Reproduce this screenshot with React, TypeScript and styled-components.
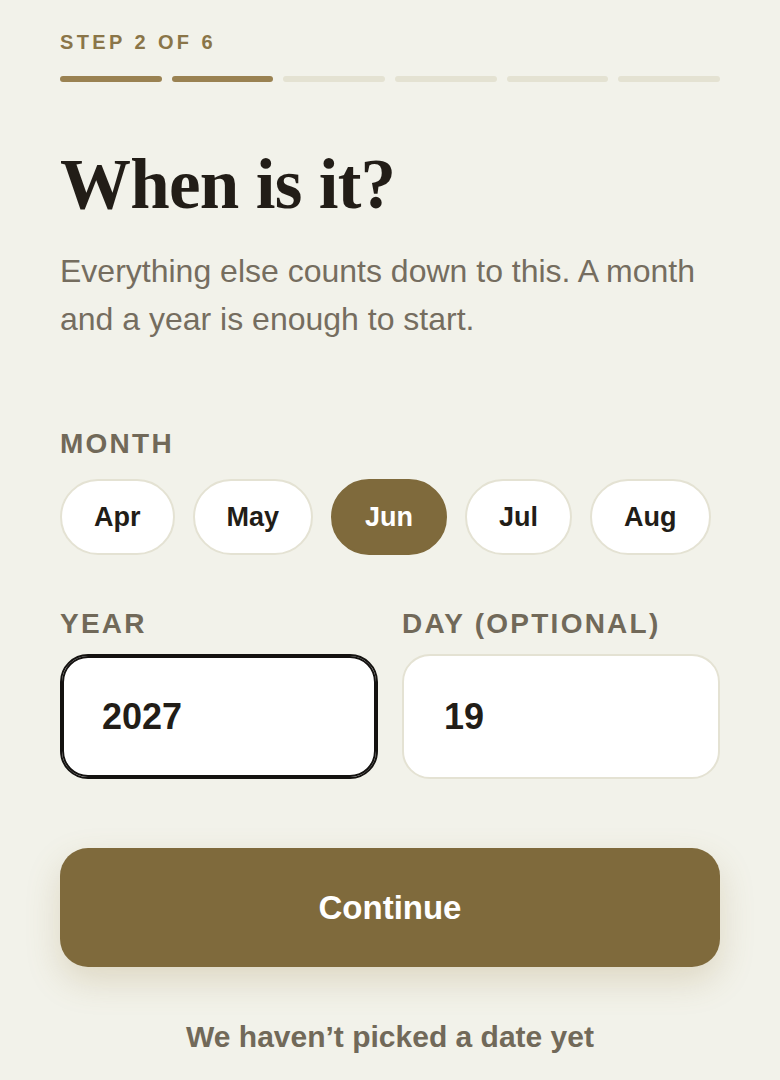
import React from "react";
import styled, { createGlobalStyle } from "styled-components";

const Global = createGlobalStyle`
  html, body { margin: 0; padding: 0; background: #f2f2ea; }
  body { font-family: "Liberation Sans", Arial, sans-serif; }
  * { box-sizing: border-box; }
`;

const Page = styled.main`
  width: 780px;
  min-height: 1080px;
  padding: 30px 60px 0;
  display: flex;
  flex-direction: column;
`;

const StepLabel = styled.div`
  font-size: 20px;
  line-height: 24px;
  font-weight: 700;
  letter-spacing: 0.17em;
  color: #8a7548;
`;

const Progress = styled.div`
  display: grid;
  grid-template-columns: repeat(6, 1fr);
  gap: 10px;
  margin-top: 22px;
`;

const Segment = styled.div<{ $active: boolean }>`
  height: 6px;
  border-radius: 3px;
  background: ${(p) => (p.$active ? "#9a8252" : "#e4e2d2")};
`;

const Title = styled.h1`
  margin: 64px 0 0;
  font-family: "Liberation Serif", "Times New Roman", serif;
  font-weight: 700;
  font-size: 71px;
  line-height: 77px;
  letter-spacing: -0.01em;
  color: #221d17;
`;

const Lead = styled.p`
  margin: 24px 0 0;
  font-size: 32px;
  line-height: 48px;
  color: #756d5f;
`;

const FieldLabel = styled.div<{ $top: number; $gap: number }>`
  margin-top: ${(p) => p.$top}px;
  margin-bottom: ${(p) => p.$gap}px;
  font-size: 28px;
  line-height: 32px;
  font-weight: 700;
  letter-spacing: 0.08em;
  color: #716959;
`;

const Chips = styled.div`
  display: flex;
  gap: 18px;
`;

const Chip = styled.button<{ $selected: boolean }>`
  height: 76px;
  padding: 0 32px;
  border-radius: 999px;
  border: 2px solid ${(p) => (p.$selected ? "#7f6a3c" : "#e4e2d3")};
  background: ${(p) => (p.$selected ? "#7f6a3c" : "#ffffff")};
  color: ${(p) => (p.$selected ? "#ffffff" : "#221d17")};
  font-family: "Liberation Sans", Arial, sans-serif;
  font-size: 27px;
  font-weight: 700;
  cursor: pointer;
`;

const Row = styled.div`
  display: grid;
  grid-template-columns: 1fr 1fr;
  gap: 24px;
`;

const Field = styled.div`
  display: flex;
  flex-direction: column;
`;

const Input = styled.input<{ $focused?: boolean }>`
  width: 100%;
  height: 125px;
  padding: 0 40px;
  border-radius: 28px;
  border: 2px solid ${(p) => (p.$focused ? "#141210" : "#e4e2d3")};
  box-shadow: ${(p) => (p.$focused ? "inset 0 0 0 2px #141210" : "none")};
  background: #ffffff;
  color: #221d17;
  font-family: "Liberation Sans", Arial, sans-serif;
  font-size: 36px;
  font-weight: 700;
  outline: none;
`;

const Continue = styled.button`
  margin-top: 69px;
  height: 119px;
  width: 100%;
  border: none;
  border-radius: 28px;
  background: #7f6a3c;
  color: #ffffff;
  font-family: "Liberation Sans", Arial, sans-serif;
  font-size: 33px;
  font-weight: 700;
  box-shadow: 0 14px 34px rgba(150, 125, 60, 0.22);
  cursor: pointer;
`;

const Secondary = styled.button`
  margin-top: 52px;
  align-self: center;
  border: none;
  background: none;
  padding: 0;
  font-family: "Liberation Sans", Arial, sans-serif;
  font-size: 30px;
  line-height: 36px;
  font-weight: 700;
  color: #716959;
  cursor: pointer;
`;

const months = ["Apr", "May", "Jun", "Jul", "Aug"];

export default function App() {
  return (
    <>
      <Global />
      <Page>
        <StepLabel>STEP 2 OF 6</StepLabel>
        <Progress>
          {[0, 1, 2, 3, 4, 5].map((i) => (
            <Segment key={i} $active={i < 2} />
          ))}
        </Progress>
        <Title>When is it?</Title>
        <Lead>
          Everything else counts down to this. A month and a year is enough to start.
        </Lead>
        <FieldLabel $top={85} $gap={19}>MONTH</FieldLabel>
        <Chips>
          {months.map((m) => (
            <Chip key={m} $selected={m === "Jun"}>
              {m}
            </Chip>
          ))}
        </Chips>
        <Row>
          <Field>
            <FieldLabel $top={53} $gap={14}>YEAR</FieldLabel>
            <Input $focused defaultValue="2027" />
          </Field>
          <Field>
            <FieldLabel $top={53} $gap={14}>DAY (OPTIONAL)</FieldLabel>
            <Input defaultValue="19" />
          </Field>
        </Row>
        <Continue>Continue</Continue>
        <Secondary>We haven’t picked a date yet</Secondary>
      </Page>
    </>
  );
}
